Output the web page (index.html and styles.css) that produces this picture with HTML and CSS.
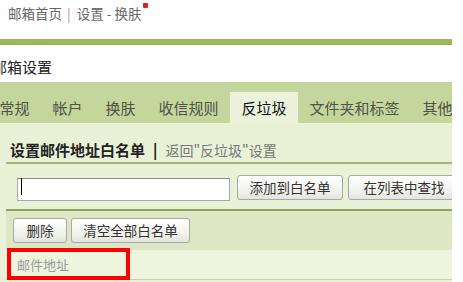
FILE: index.html
```html
<!DOCTYPE html>
<html lang="zh">
<head>
<meta charset="utf-8">
<link rel="stylesheet" href="styles.css">
</head>
<body>
<div class="page">
  <div class="crumbs">邮箱首页<span class="sep">|</span>设置 - 换肤<span class="dot"></span></div>
  <div class="greenbar"></div>
  <div class="settings-title">邮箱设置</div>
  <div class="tabs">
    <div class="tab">常规</div>
    <div class="tab">帐户</div>
    <div class="tab">换肤</div>
    <div class="tab">收信规则</div>
    <div class="tab active">反垃圾</div>
    <div class="tab">文件夹和标签</div>
    <div class="tab">其他设置</div>
  </div>
  <div class="content">
    <div class="head"><span class="h-title">设置邮件地址白名单</span><span class="h-bar">|</span><a class="h-back">返回"反垃圾"设置</a></div>
    <div class="add-row">
      <div class="input-wrap"><input class="addr" type="text"><span class="caret"></span></div>
      <button class="btn btn-add">添加到白名单</button>
      <button class="btn btn-find">在列表中查找</button>
    </div>
    <div class="tool-row">
      <button class="btn btn-del">删除</button>
      <button class="btn btn-clear">清空全部白名单</button>
    </div>
    <div class="list-head">邮件地址</div>
    <div class="highlight"></div>
  </div>
</div>
</body>
</html>
```

FILE: styles.css
```css
* { box-sizing: border-box; }
html, body { margin: 0; padding: 0; background: #fff; }
body {
  font-family: "Noto Sans CJK SC", "Liberation Sans", sans-serif;
  width: 463px;
  height: 282px;
  overflow: hidden;
}
.page {
  width: 452px;
  height: 282px;
  overflow: hidden;
  position: relative;
}
.crumbs {
  height: 39px;
  padding: 3px 0 0 8px;
  font-size: 13.5px;
  line-height: 20px;
  color: #666;
  white-space: nowrap;
}
.crumbs .sep { color: #999; margin: 0 6px 0 5px; }
.crumbs .dot {
  display: inline-block;
  width: 5px;
  height: 5px;
  background: #e02020;
  border-radius: 1px;
  vertical-align: top;
  margin: 0 0 0 2px;
}
.greenbar {
  height: 6px;
  background: #9cba5c;
  border-bottom: 1px solid #8eab50;
}
.settings-title {
  height: 37px;
  padding-top: 13px;
  margin-left: -8px;
  font-size: 15px;
  line-height: 18px;
  color: #222;
  white-space: nowrap;
}
.tabs {
  height: 41px;
  background: #c4d69b;
  display: flex;
  align-items: flex-end;
  white-space: nowrap;
  margin-left: -12px;
}
.tab {
  flex: none;
  height: 31px;
  line-height: 32px;
  padding: 0 11.5px;
  font-size: 15px;
  color: #4f5248;
}
.tab.active {
  background: #ebf2dc;
  color: #111;
}
.content {
  background: #e9f1d7;
  height: 159px;
  position: relative;
}
.head {
  margin-left: 6px;
  height: 41px;
  padding: 17px 0 0 4px;
  line-height: 18px;
  border-bottom: 2px solid #a4b676;
  white-space: nowrap;
}
.h-title { font-size: 15px; font-weight: bold; color: #222; }
.h-bar { font-size: 15px; font-weight: bold; color: #111; margin: 0 8px 0 8px; }
.h-back { font-size: 14px; color: #777; }
.add-row {
  margin-left: 6px;
  height: 47px;
  padding: 11px 0 0 11px;
  display: flex;
  gap: 7px;
  align-items: flex-start;
  border-bottom: 2px solid #8ea35c;
  white-space: nowrap;
}
.input-wrap {
  position: relative;
  width: 213px;
  height: 23px;
  flex: none;
}
.addr {
  width: 213px;
  height: 23px;
  margin: 0;
  border: 1px solid #a8a8a8;
  border-top-color: #8a8a8a;
  background: #fff;
  padding: 0;
}
.caret {
  position: absolute;
  left: 4px;
  top: 3px;
  width: 1px;
  height: 17px;
  background: #000;
}
.btn {
  flex: none;
  height: 25px;
  margin: 0;
  padding: 0;
  font-family: "Noto Sans CJK SC", "Liberation Sans", sans-serif;
  font-size: 13.5px;
  line-height: 23px;
  color: #333;
  border: 1px solid #a9a9a9;
  border-radius: 3px;
  background: linear-gradient(#ffffff, #f0f0ec 70%, #e4e4de);
}
.btn-add { width: 106px; }
.btn-find { width: 112px; margin-left: -2px; }
.tool-row {
  margin-left: 6px;
  height: 39px;
  padding: 7px 0 0 7px;
  display: flex;
  gap: 4px;
  background: #dde7c3;
}
.btn-del { width: 54px; }
.btn-clear { width: 119px; }
.list-head {
  margin-left: 6px;
  height: 30px;
  padding-left: 11px;
  line-height: 29px;
  font-size: 13px;
  color: #9a9a9a;
  background: #eef4de;
  border-bottom: 1px solid #c6d3a2;
}
.highlight {
  position: absolute;
  left: 7px;
  top: 125px;
  width: 123px;
  height: 32px;
  border: 4px solid #f00;
}
```
